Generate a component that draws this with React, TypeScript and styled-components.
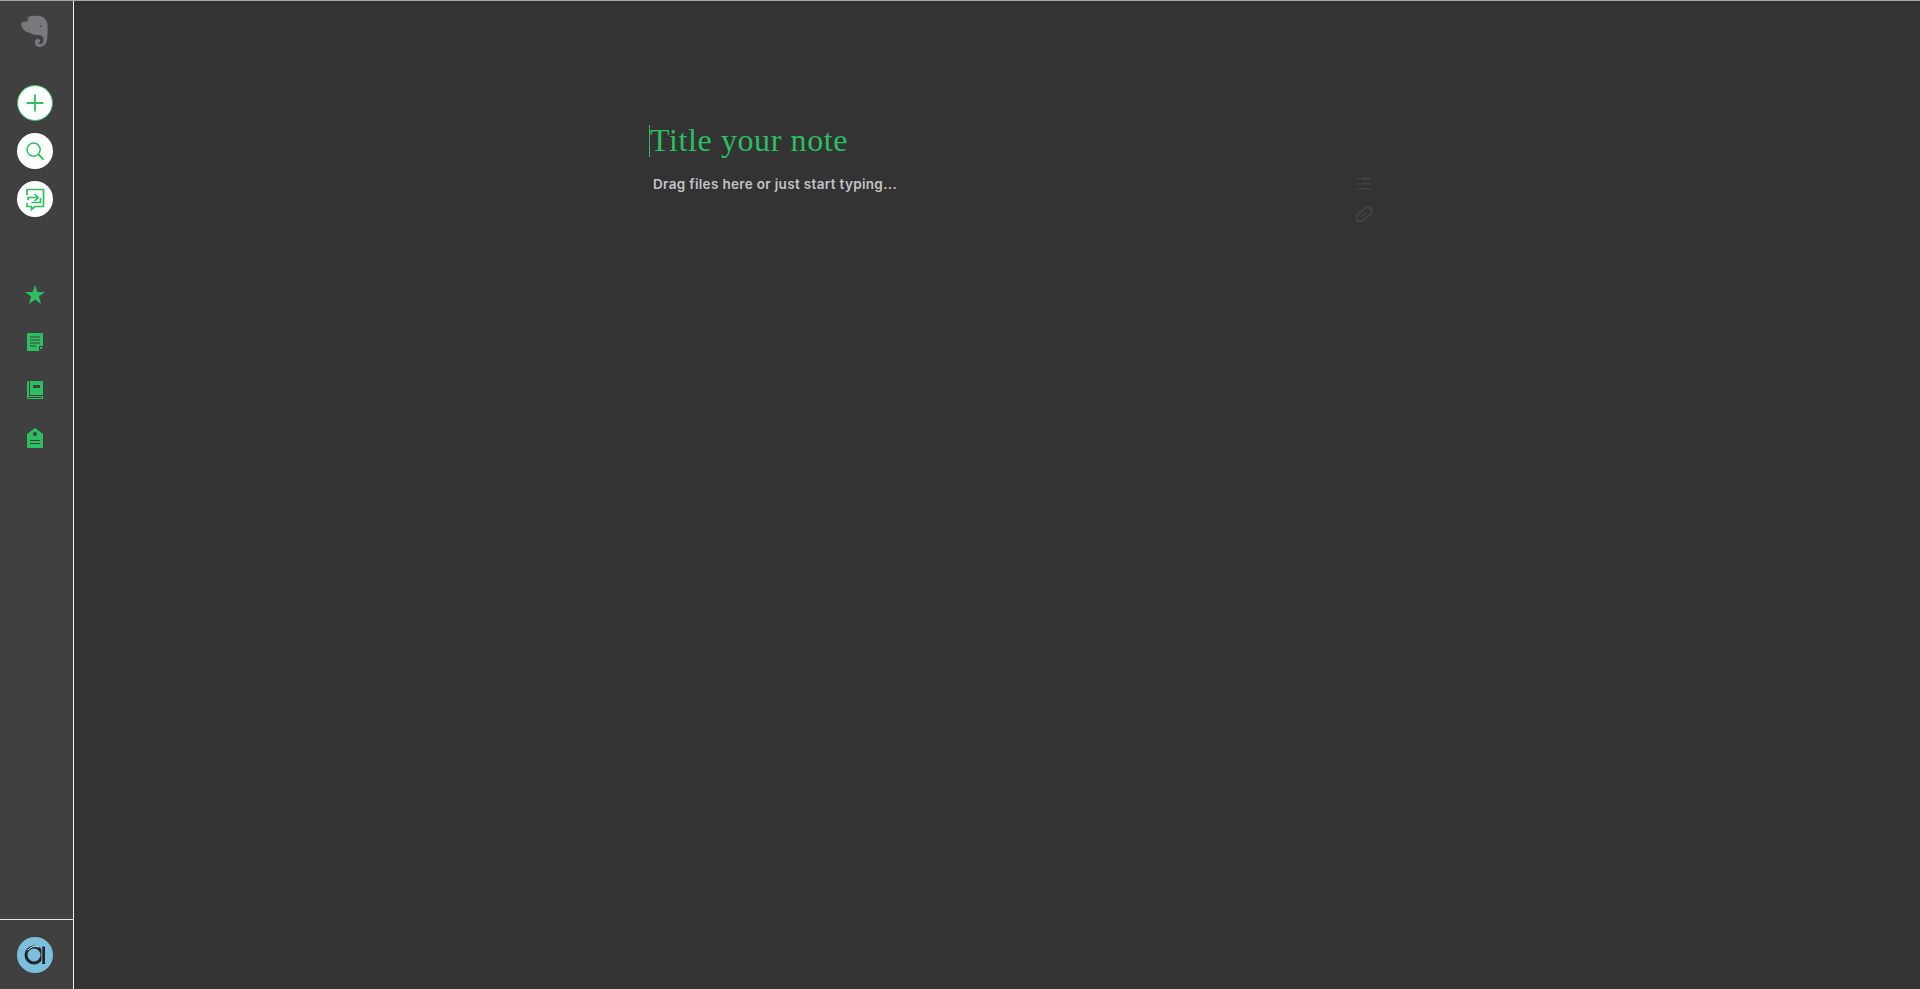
import React from "react";
import styled, { createGlobalStyle } from "styled-components";

const Global = createGlobalStyle`
  html, body { margin: 0; padding: 0; height: 100%; background: #333333; overflow: hidden; }
  #root { height: 100%; }
`;

const Page = styled.div`
  display: flex;
  height: 989px;
  background: #333333;
  border-top: 1px solid #a8a8a8;
  box-sizing: border-box;
`;

const Sidebar = styled.nav`
  width: 74px;
  flex: none;
  box-sizing: border-box;
  background: #404040;
  border-right: 1px solid #f0f0f0;
  display: flex;
  flex-direction: column;
  align-items: stretch;
`;

const SideTop = styled.div`
  flex: 1;
  display: flex;
  flex-direction: column;
  align-items: center;
  padding: 14px 3px 0 0;
`;

const Logo = styled.div`
  height: 32px;
  width: 28px;
  margin-bottom: 38px;
  margin-left: -1px;
  display: flex;
`;

const CircleButton = styled.button<{ $ring?: boolean }>`
  width: 36px;
  height: 36px;
  padding: 0;
  margin-bottom: 12px;
  border-radius: 50%;
  background: #ffffff;
  border: ${(p) => (p.$ring ? "1.5px solid #2dbe60" : "none")};
  box-sizing: border-box;
  display: flex;
  align-items: center;
  justify-content: center;
`;

const Shortcuts = styled.div`
  margin-top: 53px;
  display: flex;
  flex-direction: column;
  align-items: center;
  gap: 24px;
`;

const ShortcutIcon = styled.div`
  width: 24px;
  height: 24px;
  display: flex;
  align-items: center;
  justify-content: center;
`;

const SideBottom = styled.div`
  height: 70px;
  flex: none;
  box-sizing: border-box;
  border-top: 1px solid #e4e4e4;
  display: flex;
  justify-content: center;
  padding: 17px 3px 0 0;
`;

const Avatar = styled.div`
  width: 36px;
  height: 36px;
  border-radius: 50%;
  background: #7cbfdc;
  display: flex;
  align-items: center;
  justify-content: center;
`;

const Main = styled.main`
  flex: 1;
  display: flex;
  align-items: flex-start;
  padding: 124px 0 0 575px;
`;

const Note = styled.div`
  width: 703px;
  flex: none;
`;

const Title = styled.div`
  height: 32px;
  line-height: 30px;
  font-family: "Liberation Serif", serif;
  font-size: 32px;
  font-weight: 400;
  color: #2dbe60;
  border-left: 1px solid #2dbe60;
  letter-spacing: 0.6px;
  white-space: nowrap;
`;

const Hint = styled.div`
  margin: 17px 0 0 4px;
  font-family: "Inter", sans-serif;
  font-size: 13.5px;
  line-height: 20px;
  font-weight: 600;
  color: #c4c4c8;
  letter-spacing: 0.33px;
  white-space: nowrap;
`;

const Tools = styled.div`
  display: flex;
  flex-direction: column;
  align-items: center;
  gap: 15px;
  margin-top: 50px;
  margin-left: 4px;
`;

const ToolIcon = styled.div`
  width: 16px;
  height: 16px;
  display: flex;
`;

const G = "#2dbe60";

export default function App() {
  return (
    <Page>
      <Global />
      <Sidebar>
        <SideTop>
          <Logo>
            <svg width="28" height="32" viewBox="0 0 28 32">
              <path
                fill="#7a7a7e"
                d="M7 2 Q12 0 19 1 Q26 3 26.5 10 Q27 18 26 25 Q25 31 19 32 Q14 32 14 27.5 Q14 23.5 17.5 24 Q20 25 19 27 Q18 28 17 27 Q17 29.5 20 29 Q23 28 22.4 23.5 Q21.5 20 18 20 Q12 20.5 9 18 Q3 17 1 12 Q-0.5 9 1 6.5 L6 6 Z"
              />
              <circle cx="19.5" cy="11" r="1" fill="#404040" />
              <path d="M7.5 2.5 L6.5 6.5 L1.5 7" stroke="#404040" strokeWidth="0.6" fill="none" />
            </svg>
          </Logo>
          <CircleButton $ring aria-label="New note">
            <svg width="20" height="20" viewBox="0 0 20 20">
              <path d="M10 1.5V18.5M1.5 10H18.5" stroke={G} strokeWidth="1.8" fill="none" />
            </svg>
          </CircleButton>
          <CircleButton aria-label="Search">
            <svg width="20" height="20" viewBox="0 0 20 20" fill="none" stroke={G}>
              <circle cx="8.6" cy="8.6" r="6.6" strokeWidth="1.5" />
              <path d="M13.4 13.4 L18.6 18.6" strokeWidth="2" />
            </svg>
          </CircleButton>
          <CircleButton aria-label="Work chat">
            <svg width="20" height="23" viewBox="0 0 20 23" fill="none" stroke={G} strokeWidth="1.7">
              <path d="M2 7 V1.5 H18.5 V18.5 H10 L6.5 21.5 V18.5 H2 V15" />
              <path d="M3 12 V9.5 H13 M9.6 6 L13.2 9.5 L9.6 13" />
              <path d="M15.5 10 V14.5 H6.5" />
            </svg>
          </CircleButton>
          <Shortcuts>
            <ShortcutIcon>
              <svg width="20" height="19" viewBox="0 0 20 19">
                <path fill={G} d="M10 0 L12.4 6.9 L20 7.1 L13.9 11.6 L16.1 18.9 L10 14.6 L3.9 18.9 L6.1 11.6 L0 7.1 L7.6 6.9 Z" />
              </svg>
            </ShortcutIcon>
            <ShortcutIcon>
              <svg width="16" height="18" viewBox="0 0 16 18">
                <path fill={G} d="M1 0 H15 A1 1 0 0 1 16 1 V13 H12 V18 H1 A1 1 0 0 1 0 17 V1 A1 1 0 0 1 1 0 Z" />
                <path fill={G} d="M13 14 H16 L13 17 Z" />
                <path d="M3 4 H13 M3 7 H13 M3 10 H13 M3 13 H9" stroke="#404040" strokeWidth="1" />
              </svg>
            </ShortcutIcon>
            <ShortcutIcon>
              <svg width="16" height="18" viewBox="0 0 16 18">
                <path fill={G} d="M3 0 H15 A1 1 0 0 1 16 1 V14 H3 Z" />
                <path fill={G} d="M1 0 H2 V15 H16 V18 H1 A1 1 0 0 1 0 17 V1 A1 1 0 0 1 1 0 Z" />
                <rect x="1" y="16" width="14" height="1" fill="#404040" />
                <rect x="6" y="4" width="7" height="3" fill="#404040" />
              </svg>
            </ShortcutIcon>
            <ShortcutIcon>
              <svg width="16" height="20" viewBox="0 0 16 20">
                <path fill={G} d="M8 0 L16 6 V19 A1 1 0 0 1 15 20 H1 A1 1 0 0 1 0 19 V6 Z" />
                <circle cx="8" cy="6" r="2" fill="#404040" />
                <path d="M3 12.5 H13 M3 15.5 H13" stroke="#404040" strokeWidth="1" />
              </svg>
            </ShortcutIcon>
          </Shortcuts>
        </SideTop>
        <SideBottom>
          <Avatar>
            <svg width="26" height="26" viewBox="0 0 26 26" fill="none">
              <circle cx="12" cy="13" r="8" stroke="#20262c" strokeWidth="3" />
              <path d="M21.5 4.5 V22" stroke="#20262c" strokeWidth="3" />
              <path d="M5.4 8.5 A 9.6 9.6 0 0 1 16.5 5" stroke="#e6edf2" strokeWidth="1" />
              <path d="M19.8 5 V21" stroke="#c9d3da" strokeWidth="0.7" />
            </svg>
          </Avatar>
        </SideBottom>
      </Sidebar>
      <Main>
        <Note>
          <Title>Title your note</Title>
          <Hint>Drag files here or just start typing...</Hint>
        </Note>
        <Tools>
          <ToolIcon>
            <svg width="16" height="16" viewBox="0 0 16 16" fill="#444444">
              <path d="M1 3h2v1.5H1zM5 3h10v1.5H5zM1 8h2v1.5H1zM5 8h10v1.5H5zM1 13h2v1.5H1zM5 13h10v1.5H5z" />
            </svg>
          </ToolIcon>
          <ToolIcon>
            <svg width="17" height="17" viewBox="0 0 17 17" fill="none" stroke="#444444">
              <rect x="-9.5" y="-4.2" width="19" height="8.4" rx="4.2" strokeWidth="2.2" transform="translate(8.5 8.5) rotate(-40)" />
              <path d="M5.2 11.3 L11.5 6" strokeWidth="1.6" />
            </svg>
          </ToolIcon>
        </Tools>
      </Main>
    </Page>
  );
}
